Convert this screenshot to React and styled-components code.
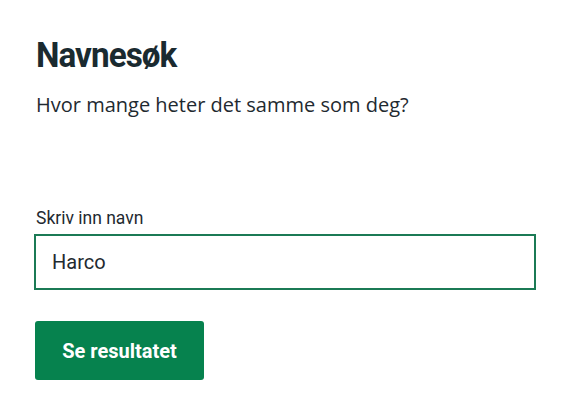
import React from "react";
import styled, { createGlobalStyle } from "styled-components";

const Global = createGlobalStyle`
  html, body { margin: 0; padding: 0; background: #fff; }
  * { box-sizing: border-box; }
`;

const Page = styled.main`
  display: flex;
  flex-direction: column;
  align-items: flex-start;
  padding: 36px 26px 0 34px;
  width: 562px;
`;

const Title = styled.h1`
  margin: 0 0 0 2px;
  font-family: Roboto, "Liberation Sans", sans-serif;
  font-weight: 700;
  font-size: 35px;
  line-height: 40px;
  letter-spacing: -1px;
  color: #1a2a30;
  transform: scaleX(0.95);
  transform-origin: left center;
`;

const Lead = styled.p`
  margin: 15px 0 0 2px;
  font-family: "Open Sans", "Liberation Sans", sans-serif;
  font-size: 20px;
  line-height: 28px;
  color: #1f2a30;
`;

const Form = styled.form`
  display: flex;
  flex-direction: column;
  align-items: flex-start;
  margin-top: 89px;
  width: 502px;
`;

const Label = styled.label`
  margin-left: 2px;
  font-family: Roboto, "Liberation Sans", sans-serif;
  font-size: 17.5px;
  line-height: 20px;
  color: #1f2a30;
`;

const Input = styled.input`
  margin-top: 6px;
  width: 502px;
  height: 56px;
  border: 2px solid #1b7a55;
  border-radius: 0;
  padding: 0 16px;
  font-family: Roboto, "Liberation Sans", sans-serif;
  font-size: 20px;
  color: #1f2a30;
  outline: none;
`;

const Button = styled.button`
  margin-top: 31px;
  margin-left: 1px;
  width: 169px;
  height: 59px;
  border: none;
  border-radius: 3px;
  background: #06824e;
  color: #fff;
  font-family: Roboto, "Liberation Sans", sans-serif;
  font-weight: 700;
  font-size: 20px;
  cursor: pointer;
`;

export default function App() {
  return (
    <>
      <Global />
      <Page>
        <Title>Navnesøk</Title>
        <Lead>Hvor mange heter det samme som deg?</Lead>
        <Form onSubmit={(e) => e.preventDefault()}>
          <Label htmlFor="navn">Skriv inn navn</Label>
          <Input id="navn" defaultValue="Harco" />
          <Button type="submit">Se resultatet</Button>
        </Form>
      </Page>
    </>
  );
}
